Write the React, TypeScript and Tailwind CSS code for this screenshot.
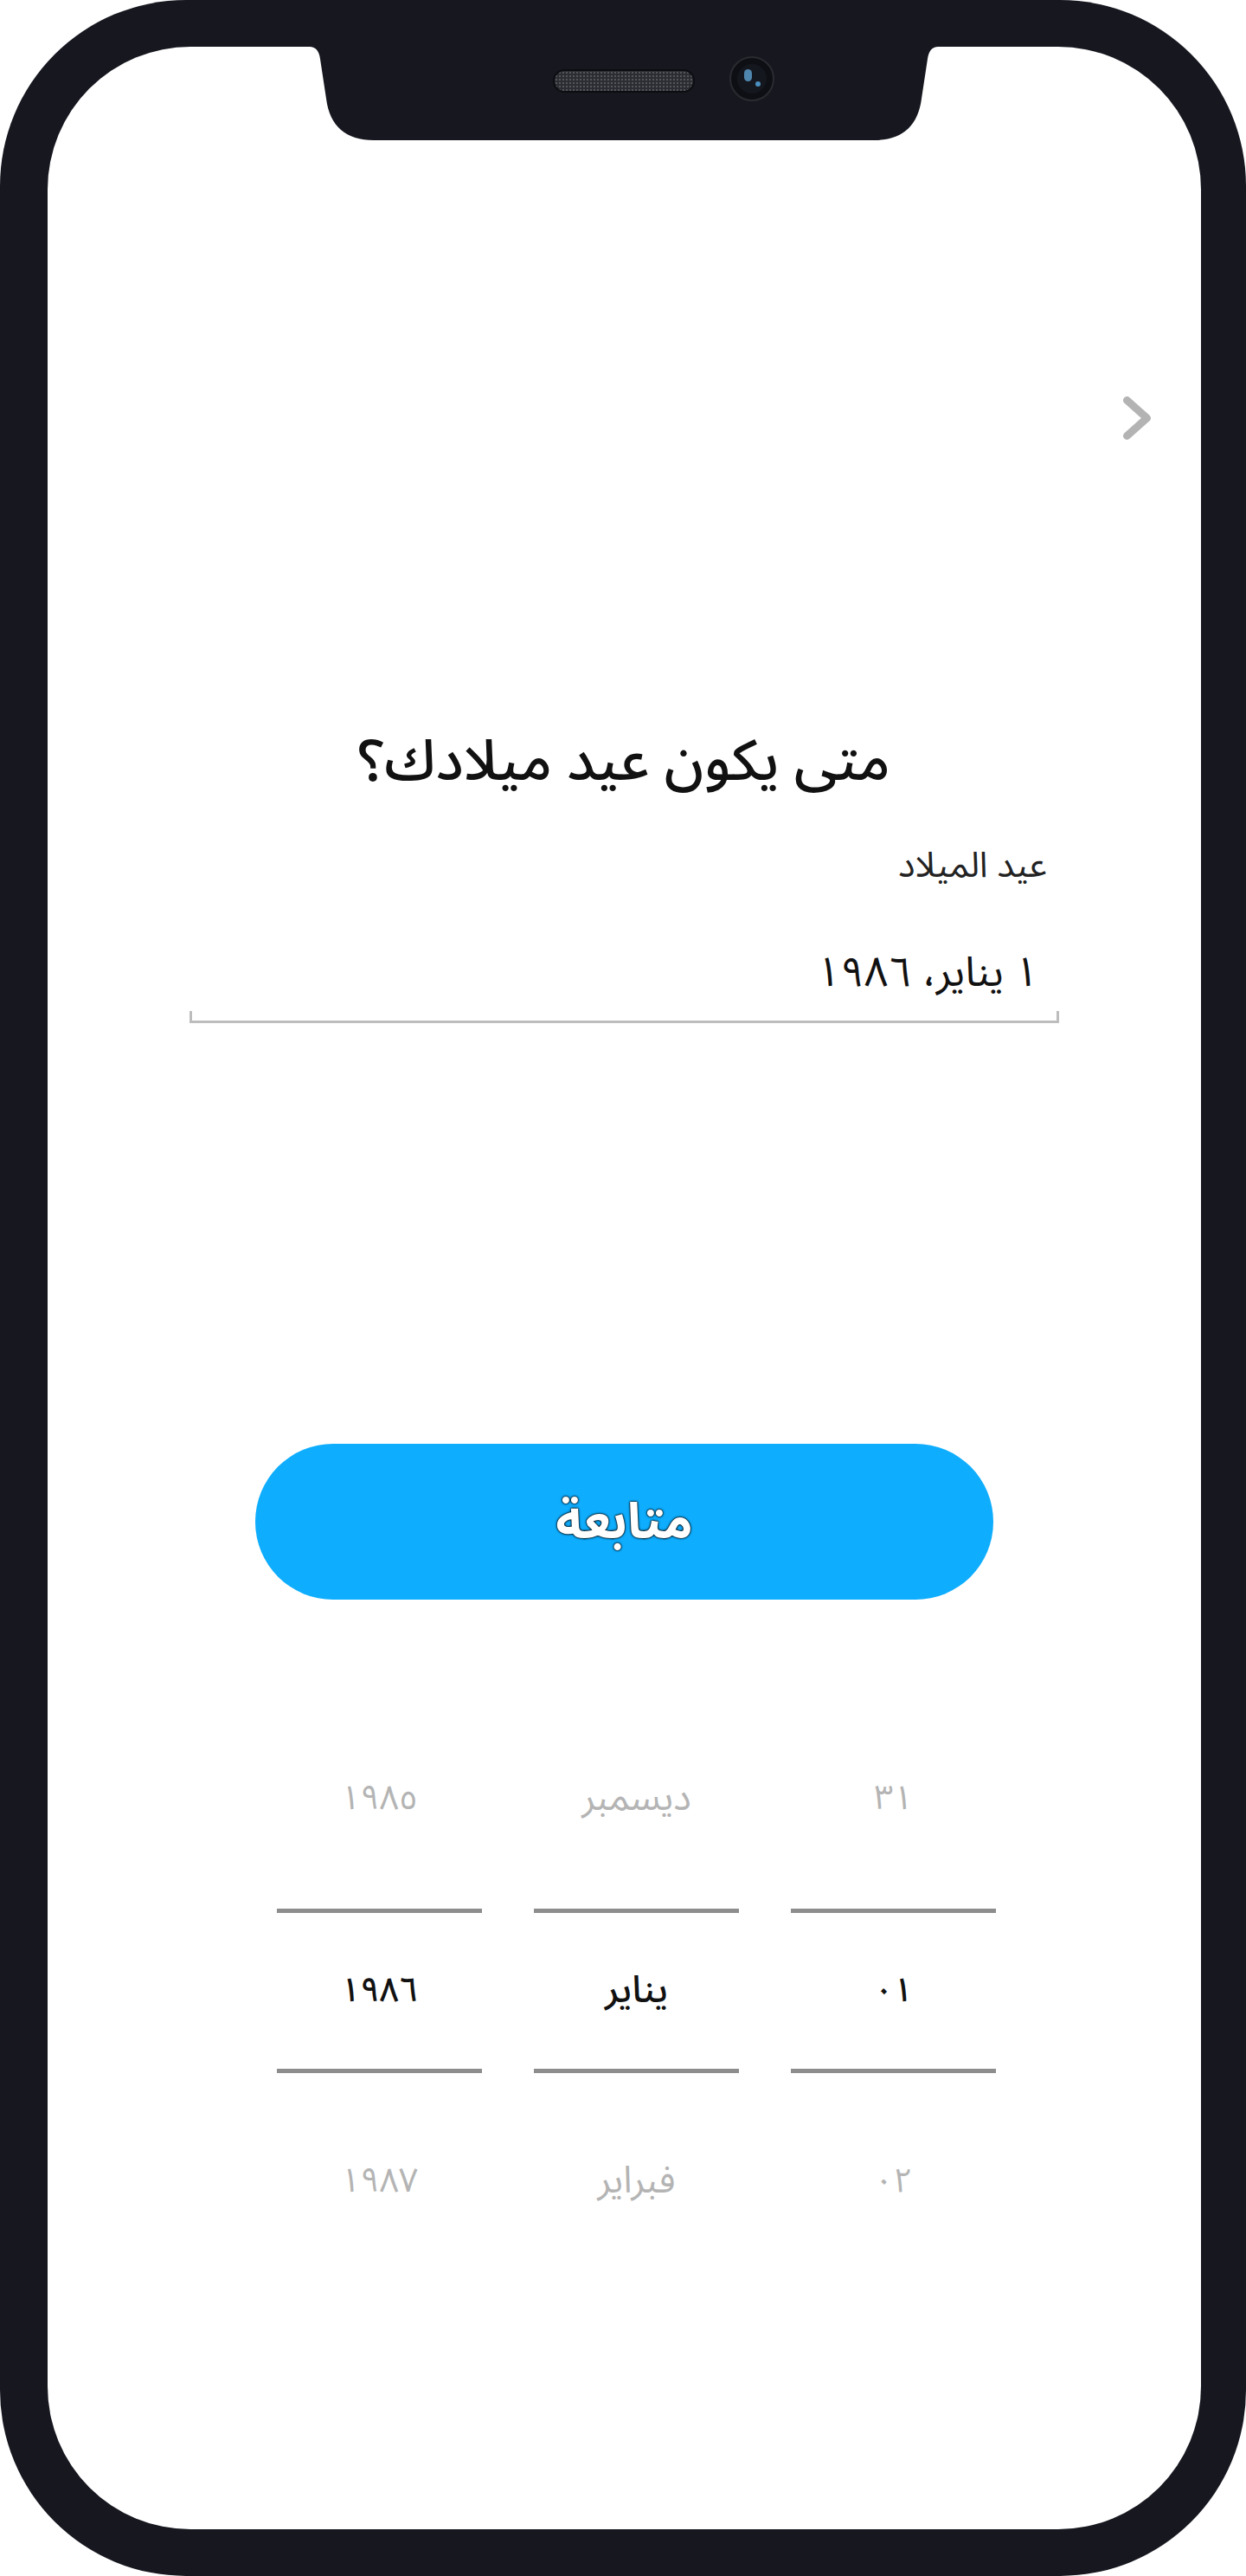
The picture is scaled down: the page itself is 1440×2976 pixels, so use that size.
import React from "react";

const AR = "font-['Noto_Sans_Arabic','DejaVu_Sans',sans-serif]";

type PickerColumn = { prev: string; current: string; next: string; size: string };

// right to left: day, month, year
const COLUMNS: PickerColumn[] = [
  { prev: "٣١", current: "٠١", next: "٠٢", size: "text-[39px]" },
  { prev: "ديسمبر", current: "يناير", next: "فبراير", size: "text-[43px]" },
  { prev: "١٩٨٥", current: "١٩٨٦", next: "١٩٨٧", size: "text-[39px]" },
];

function Notch() {
  return (
    <>
      <svg
        className="absolute left-[330px] top-[50px] h-[114px] w-[782px]"
        viewBox="0 0 782 114"
      >
        <path
          d="M0,0 V4 H28 Q38,4 40,18 L47,64 C51,96 70,112 102,112 H680 C712,112 731,96 735,64 L742,18 Q744,4 754,4 H782 V0 Z"
          fill="#16171f"
        />
      </svg>
      {/* speaker grille */}
      <div className="absolute left-[639px] top-[80px] h-[27px] w-[164px] rounded-full border-2 border-[#0c0d11] bg-[#2c2d33] bg-[radial-gradient(circle,#55565c_1px,transparent_1.3px)] bg-[length:4px_4px]" />
      {/* front camera */}
      <div className="absolute left-[843px] top-[65px] flex h-[52px] w-[52px] items-center justify-center rounded-full border-2 border-[#2a2b31] bg-[#0e0f14]">
        <div className="relative h-[34px] w-[34px] rounded-full bg-[#15171f]">
          <div className="absolute left-[8px] top-[6px] h-[14px] w-[9px] rounded-full bg-[#4f86ad]" />
          <div className="absolute left-[21px] top-[20px] h-[6px] w-[6px] rounded-full bg-[#4a8fc0]" />
        </div>
      </div>
    </>
  );
}

function Picker() {
  return (
    <div dir="rtl" className={`ml-[265px] mt-[180px] flex w-[831px] gap-[60px] ${AR}`}>
      {COLUMNS.map((col) => (
        <div key={col.current} className={`flex w-[237px] flex-col items-center ${col.size}`}>
          <div className="flex h-[100px] items-center text-[#b4b4b4]">{col.prev}</div>
          <div className="mt-[77px] h-[5px] w-full bg-[#8d8d8d]" />
          <div className="flex h-[180px] items-center font-medium text-[#111]">{col.current}</div>
          <div className="h-[5px] w-full bg-[#8d8d8d]" />
          <div className="mt-[75px] flex h-[100px] items-center text-[#b4b4b4]">{col.next}</div>
        </div>
      ))}
    </div>
  );
}

export default function App() {
  return (
    <div className="h-[2976px] w-[1440px] bg-white">
      <div className="relative h-full w-full rounded-[215px] bg-[#16171f] pb-[54px] pl-[55px] pr-[52px] pt-[54px]">
        <div className="flex h-full w-full flex-col overflow-hidden rounded-[165px] bg-white">
          {/* top bar with back chevron */}
          <div className="flex justify-end pr-[58px] pt-[404px]">
            <svg width="32" height="50" viewBox="0 0 32 50" fill="none">
              <path
                d="M4.5 4.5 L27.5 25 L4.5 45.5"
                stroke="#b3b3b3"
                strokeWidth="9"
                strokeLinecap="round"
                strokeLinejoin="round"
              />
            </svg>
          </div>

          <h1
            dir="rtl"
            className={`mt-[340px] text-center text-[66px] font-medium leading-[64px] text-[#111] ${AR}`}
          >
            متى يكون عيد ميلادك؟
          </h1>

          {/* birthday field */}
          <div dir="rtl" className={`mx-[164px] mt-[70px] ${AR}`}>
            <div className="pr-[14px] text-[41px] leading-[36px] text-[#222]">عيد الميلاد</div>
            <div className="mt-[81px] pr-[24px] text-[48px] leading-[50px] text-[#111]">
              ١ يناير، ١٩٨٦
            </div>
            <div className="mt-[19px] h-[14px] border-x-[3px] border-b-[3px] border-[#bdbdbd]" />
          </div>

          {/* continue button */}
          <div className="mx-[240px] mt-[486px]">
            <button
              dir="rtl"
              className={`flex h-[180px] w-full items-center justify-center rounded-full bg-[#0eadfe] text-[58px] font-bold text-white [text-shadow:0_0_3px_#000,0_0_2px_#000,0_0_1px_#000] ${AR}`}
            >
              متابعة
            </button>
          </div>

          <Picker />
        </div>
        <Notch />
      </div>
    </div>
  );
}
